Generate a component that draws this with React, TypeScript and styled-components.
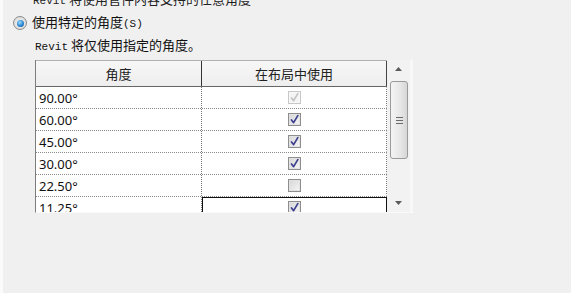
import React from 'react'
import styled, { createGlobalStyle } from 'styled-components'

interface IAngle {
  value: string
  checked: boolean
  disabled?: boolean
  focused?: boolean
}

const angles: IAngle[] = [
  { value: '90.00°', checked: true, disabled: true },
  { value: '60.00°', checked: true },
  { value: '45.00°', checked: true },
  { value: '30.00°', checked: true },
  { value: '22.50°', checked: false },
  { value: '11.25°', checked: true, focused: true },
]

const App: React.FC = () => {
  return (
    <>
      <GlobalStyle />
      <Page>
        <CutLine>
          <Mono>Revit</Mono> 将使用管件内容支持的任意角度
        </CutLine>
        <RadioRow>
          <Radio />
          <RadioLabel>
            使用特定的角度<Mono>(S)</Mono>
          </RadioLabel>
        </RadioRow>
        <Desc>
          <Mono>Revit</Mono> 将仅使用指定的角度。
        </Desc>
        <Table>
          <Grid>
            <Header>
              <HeadCell>角度</HeadCell>
              <HeadCell $last>在布局中使用</HeadCell>
            </Header>
            <Rows>
              {angles.map((a) => (
                <Row key={a.value}>
                  <AngleCell>{a.value}</AngleCell>
                  <CheckCell $focused={a.focused}>
                    <Check $disabled={a.disabled}>
                      {a.checked && (
                        <svg width="11" height="11" viewBox="0 0 11 11">
                          <path
                            d="M2.5 6 L4.6 8.6 L8.8 1.6"
                            fill="none"
                            stroke={a.disabled ? '#c4c4c4' : '#3e3f8f'}
                            strokeWidth="1.7"
                            strokeLinecap="round"
                            strokeLinejoin="round"
                          />
                        </svg>
                      )}
                    </Check>
                  </CheckCell>
                </Row>
              ))}
            </Rows>
          </Grid>
          <Scrollbar>
            <Arrow>
              <svg width="7" height="4" viewBox="0 0 7 4">
                <path d="M0 4 L3.5 0 L7 4 Z" fill="#5a5a5a" />
              </svg>
            </Arrow>
            <Track>
              <Thumb>
                <Grip />
                <Grip />
                <Grip />
              </Thumb>
            </Track>
            <Arrow>
              <svg width="7" height="4" viewBox="0 0 7 4">
                <path d="M0 0 L7 0 L3.5 4 Z" fill="#5a5a5a" />
              </svg>
            </Arrow>
          </Scrollbar>
        </Table>
      </Page>
    </>
  )
}

export default App

const GlobalStyle = createGlobalStyle`
  html, body {
    margin: 0;
    padding: 0;
    background: #f0f0f0;
  }
  body {
    font-family: "Noto Sans CJK SC", "Noto Sans", sans-serif;
    color: #1a1a1a;
  }
`

const Page = styled.div`
  width: 568px;
  height: 293px;
  overflow: hidden;
  background: #f0f0f0;
  border-left: 3px solid #fbfbfb;
`

const Mono = styled.span`
  font-family: "Liberation Mono", monospace;
  font-size: 11px;
`

const CutLine = styled.div`
  margin: -8px 0 0 30px;
  height: 13px;
  line-height: 13px;
  font-size: 13px;
  white-space: nowrap;
  color: #222;
`

const RadioRow = styled.div`
  display: flex;
  align-items: center;
  gap: 5px;
  margin: 11px 0 0 10px;
  height: 14px;
`

const Radio = styled.span`
  width: 12px;
  height: 12px;
  border-radius: 50%;
  border: 1px solid #8a8b8c;
  background: radial-gradient(circle at 50% 50%, #f2f2f2 0%, #d4d4d4 100%);
  display: flex;
  align-items: center;
  justify-content: center;
  &::after {
    content: '';
    width: 7px;
    height: 7px;
    border-radius: 50%;
    background: radial-gradient(circle at 40% 35%, #9edbff 0%, #2a86d0 55%, #124f88 100%);
  }
`

const RadioLabel = styled.span`
  font-size: 13px;
  line-height: 14px;
  white-space: nowrap;
  color: #111;
`

const Desc = styled.div`
  margin: 8px 0 0 32px;
  height: 14px;
  line-height: 14px;
  font-size: 13px;
  white-space: nowrap;
  color: #111;
`

const Table = styled.div`
  display: flex;
  margin: 8px 0 0 32px;
  width: 378px;
  height: 152px;
  border-left: 1px solid #7d7d7d;
  border-bottom: 1px solid #fafafa;
`

const Grid = styled.div`
  width: 351px;
  display: flex;
  flex-direction: column;
  background: #fff;
`

const Header = styled.div`
  display: grid;
  grid-template-columns: 166px 185px;
  height: 25px;
  border-top: 1px solid #b0b0b0;
  border-bottom: 1px solid #666;
  background: linear-gradient(#f7f7f7, #eeeeee);
`

const HeadCell = styled.div<{ $last?: boolean }>`
  display: flex;
  align-items: center;
  justify-content: center;
  font-size: 13px;
  color: #222;
  border-right: 1px solid ${(p) => (p.$last ? '#444' : '#333')};
`

const Rows = styled.div`
  flex: 1;
  overflow: hidden;
`

const Row = styled.div`
  display: grid;
  grid-template-columns: 166px 185px;
  height: 22px;
  box-sizing: border-box;
  border-bottom: 1px dotted #8a8a8a;
`

const AngleCell = styled.div`
  display: flex;
  align-items: center;
  padding-left: 3px;
  font-family: "Noto Sans", sans-serif;
  font-size: 13px;
  color: #111;
  border-right: 1px dotted #7a7a7a;
`

const CheckCell = styled.div<{ $focused?: boolean }>`
  display: flex;
  align-items: center;
  justify-content: center;
  box-sizing: border-box;
  border: 1px solid ${(p) => (p.$focused ? '#111' : 'transparent')};
  border-right: 1px ${(p) => (p.$focused ? 'solid #111' : 'dotted #7a7a7a')};
`

const Check = styled.span<{ $disabled?: boolean }>`
  width: 11px;
  height: 11px;
  display: flex;
  align-items: center;
  justify-content: center;
  border: 1px solid ${(p) => (p.$disabled ? '#c8c8c8' : '#8e8e8e')};
  background: ${(p) =>
    p.$disabled ? '#f4f4f4' : 'linear-gradient(135deg, #d6d6d6, #f6f6f6)'};
  box-shadow: inset 0 0 0 1px ${(p) => (p.$disabled ? '#f8f8f8' : '#e2e2e2')};
`

const Scrollbar = styled.div`
  width: 23px;
  display: flex;
  flex-direction: column;
  background: #f2f2f2;
  border-right: 3px solid #f8f8f8;
`

const Arrow = styled.div`
  height: 18px;
  display: flex;
  align-items: center;
  justify-content: center;
`

const Track = styled.div`
  flex: 1;
  display: flex;
  flex-direction: column;
  padding: 3px 2px 0 3px;
`

const Thumb = styled.div`
  height: 78px;
  box-sizing: border-box;
  border: 1px solid #9a9a9a;
  border-radius: 3px;
  background: linear-gradient(90deg, #f4f4f4, #e6e6e6 60%, #d6d6d6);
  display: flex;
  flex-direction: column;
  align-items: center;
  justify-content: center;
  gap: 2px;
`

const Grip = styled.span`
  width: 7px;
  height: 1px;
  background: #6a6a6a;
`
